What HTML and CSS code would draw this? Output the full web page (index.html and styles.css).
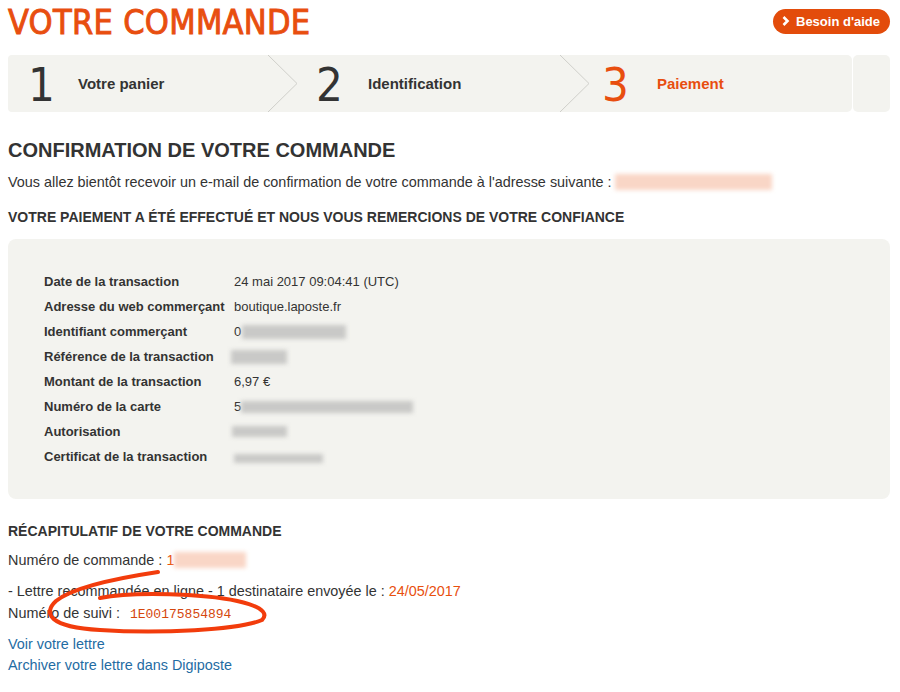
FILE: index.html
```html
<!DOCTYPE html>
<html lang="fr">
<head>
<meta charset="utf-8">
<title>Votre commande</title>
<link rel="stylesheet" href="styles.css">
</head>
<body>
<div class="page">
  <header class="top">
    <div class="title">VOTRE COMMANDE</div>
    <a class="help" href="#"><svg class="help-ico" viewBox="0 0 8 10" width="8" height="10"><path d="M1.5 1 L5.5 5 L1.5 9" fill="none" stroke="#fff" stroke-width="2.6"/></svg>Besoin d'aide</a>
  </header>

  <nav class="steps">
    <div class="step">
      <span class="num">1</span><span class="lbl">Votre panier</span>
      <svg class="chev" viewBox="0 0 30 57" width="30" height="57"><path d="M0 0 L29 28.5 L0 57" fill="none" stroke="#cfcfca" stroke-width="1"/></svg>
    </div>
    <div class="step">
      <span class="num">2</span><span class="lbl">Identification</span>
      <svg class="chev" viewBox="0 0 30 57" width="30" height="57"><path d="M0 0 L29 28.5 L0 57" fill="none" stroke="#cfcfca" stroke-width="1"/></svg>
    </div>
    <div class="step step-active">
      <span class="num">3</span><span class="lbl">Paiement</span>
    </div>
    <div class="step-end"></div>
  </nav>

  <h1 class="h1">CONFIRMATION DE VOTRE COMMANDE</h1>
  <p class="txt">Vous allez bientôt recevoir un e-mail de confirmation de votre commande à l'adresse suivante : <span class="blur blur-orange blur-mail"></span></p>
  <h2 class="h2">VOTRE PAIEMENT A ÉTÉ EFFECTUÉ ET NOUS VOUS REMERCIONS DE VOTRE CONFIANCE</h2>

  <section class="panel">
    <div class="row"><span class="k">Date de la transaction</span><span class="v">24 mai 2017 09:04:41 (UTC)</span></div>
    <div class="row"><span class="k">Adresse du web commerçant</span><span class="v">boutique.laposte.fr</span></div>
    <div class="row"><span class="k">Identifiant commerçant</span><span class="v">0<span class="blur blur-gray b1"></span></span></div>
    <div class="row"><span class="k">Référence de la transaction</span><span class="v"><span class="blur blur-gray b2"></span></span></div>
    <div class="row"><span class="k">Montant de la transaction</span><span class="v">6,97 €</span></div>
    <div class="row"><span class="k">Numéro de la carte</span><span class="v">5<span class="blur blur-gray b3"></span></span></div>
    <div class="row"><span class="k">Autorisation</span><span class="v"><span class="blur blur-gray b4"></span></span></div>
    <div class="row"><span class="k">Certificat de la transaction</span><span class="v"><span class="blur blur-gray b5"></span></span></div>
  </section>

  <h2 class="h2 recap">RÉCAPITULATIF DE VOTRE COMMANDE</h2>
  <p class="txt l1">Numéro de commande : <span class="orange">1</span><span class="blur blur-orange b6"></span></p>
  <div class="suivi">
    <p class="txt l2">- Lettre recommandée en ligne - 1 destinataire envoyée le : <span class="orange">24/05/2017</span></p>
    <p class="txt l3">Numéro de suivi : <span class="mono">1E00175854894</span></p>
    <svg class="circle" viewBox="0 0 270 80" width="270" height="80"><path d="M150 4 C110 10 64 20 48 33 C35 45 40 59 92 62 C150 66 232 62 254 52 C266 40 232 30 180 27 C140 25 112 26 92 30" fill="none" stroke="#f23c0c" stroke-width="4" stroke-linecap="round"/></svg>
  </div>
  <p class="links"><a href="#">Voir votre lettre</a><br><a href="#">Archiver votre lettre dans Digiposte</a></p>
</div>
</body>
</html>
```

FILE: styles.css
```css
html, body { margin: 0; padding: 0; background: #fff; }
body { font-family: "Liberation Sans", Arial, sans-serif; color: #333; font-size: 14.4px; }
.page { padding: 0 10px 0 8px; }

.top { display: flex; justify-content: space-between; align-items: center; height: 42px; }
.title { font-family: "DejaVu Sans", sans-serif; font-stretch: condensed; font-size: 34px; line-height: 40px; color: #e84e0f; letter-spacing: 0.3px; -webkit-text-stroke: 0.9px #e84e0f; margin-top: 1px; }
.help { display: flex; align-items: center; gap: 6px; height: 25px; padding: 0 10px 0 9px; border-radius: 13px; background: #e34c0b; color: #fff; font-weight: bold; font-size: 13px; text-decoration: none; margin-top: 0; }
.help-ico { display: block; }

.steps { display: flex; height: 57px; margin-top: 13px; }
.step { position: relative; display: flex; align-items: center; width: 290px; background: #f3f3ef; }
.step:first-child { border-radius: 4px 0 0 4px; }
.step + .step { width: 292px; }
.step-active { width: 262px !important; border-radius: 0 5px 5px 0; }
.step-end { flex: 1; margin-left: 1px; background: #f3f3ef; border-radius: 5px; }
.num { font-family: "DejaVu Sans", sans-serif; font-stretch: condensed; font-size: 47px; line-height: 57px; width: 50px; padding-left: 20px; color: #333; font-weight: normal; margin-top: 2px; }
.step + .step .num { padding-left: 18px; width: 52px; }
.step + .step-active .num { padding-left: 12px; width: 55px; }
.lbl { font-weight: bold; font-size: 15px; }
.step-active .num, .step-active .lbl { color: #e84e0f; }
.chev { position: absolute; right: 0; top: 0; }

.h1 { font-size: 20px; font-weight: bold; margin: 26px 0 0; line-height: 24px; }
.txt { margin: 0; line-height: 20px; }
.h2 { font-size: 14px; font-weight: bold; margin: 0; line-height: 18px; }
.h1 + .txt { margin-top: 10px; }
.txt + .h2 { margin-top: 16px; }

.blur { display: inline-block; vertical-align: middle; filter: blur(2px); }
.blur-orange { background: #f9d6c6; }
.blur-gray { background: #c9c9c7; }
.blur-mail { width: 157px; height: 16px; margin-top: -3px; }

.panel { margin-top: 13px; background: #f3f3ef; border-radius: 8px; padding: 30px 36px; }
.row { display: grid; grid-template-columns: 190px 1fr; height: 25px; align-items: center; font-size: 13px; }
.k { font-weight: bold; }
.v { display: flex; align-items: center; }
.b1 { width: 104px; height: 14px; margin-left: 1px; }
.b2 { width: 56px; height: 14px; margin-left: -3px; }
.b3 { width: 172px; height: 12px; margin-left: 0px; }
.b4 { width: 55px; height: 11px; margin-left: -2px; }
.b5 { width: 89px; height: 9px; margin-top: 3px; }

.recap { margin-top: 23px; }
.l1 { margin-top: 10px; }
.orange { color: #e8500e; }
.b6 { width: 72px; height: 16px; margin-top: -3px; }
.suivi { position: relative; margin-top: 11px; }
.l3 { line-height: 24px; }
.mono { font-family: "Liberation Mono", monospace; font-size: 13px; color: #d5470d; margin-left: 6px; }
.circle { position: absolute; left: 0; top: -13px; }
.links { margin: 7px 0 0; line-height: 21px; }
.links a { color: #1f6ca3; text-decoration: none; }
```
